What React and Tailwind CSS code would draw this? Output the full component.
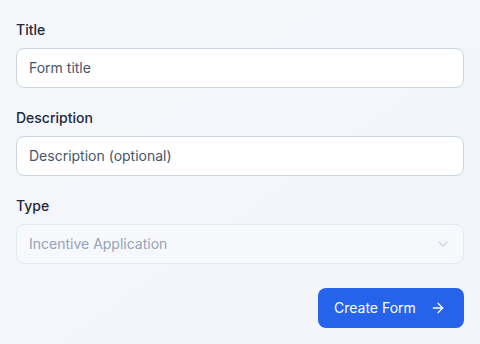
import React from "react";
import { ArrowRight, ChevronDown } from "lucide-react";

export default function App() {
  return (
    <div
      className="w-[480px] h-[344px] bg-gradient-to-br from-[#f6f7fb] to-[#f2f5fa] px-4 pt-5"
      style={{ fontFamily: "Inter, 'Noto Sans', sans-serif" }}
    >
      <div className="flex flex-col gap-5">
        <div className="flex flex-col gap-2">
          <label className="text-sm font-medium leading-5 text-[#1e293b]">Title</label>
          <div className="h-10 rounded-lg border border-[#cbd5e1] bg-white px-3 flex items-center text-sm text-[#475569]">
            Form title
          </div>
        </div>
        <div className="flex flex-col gap-2">
          <label className="text-sm font-medium leading-5 text-[#1e293b]">Description</label>
          <div className="h-10 rounded-lg border border-[#cbd5e1] bg-white px-3 flex items-center text-sm text-[#475569]">
            Description (optional)
          </div>
        </div>
        <div className="flex flex-col gap-2">
          <label className="text-sm font-medium leading-5 text-[#1e293b]">Type</label>
          <div className="h-10 rounded-lg border border-[#e2e8f0] bg-[#f8fafc]/70 px-3 flex items-center justify-between text-sm text-[#94a3b8]">
            <span>Incentive Application</span>
            <ChevronDown className="w-4 h-4 text-[#cbd5e1]" />
          </div>
        </div>
        <div className="flex justify-end pt-1">
          <button className="h-10 w-[146px] rounded-lg bg-[#2563eb] text-white text-sm font-normal flex items-center justify-between pl-4 pr-[18px]">
            <span>Create Form</span>
            <ArrowRight className="w-4 h-4" />
          </button>
        </div>
      </div>
    </div>
  );
}
